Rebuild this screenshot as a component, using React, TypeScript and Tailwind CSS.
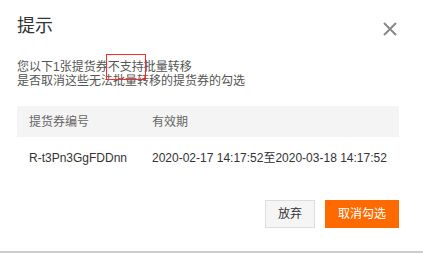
const font = { fontFamily: '"Liberation Sans", "Noto Sans CJK SC", sans-serif' };

export default function App() {
  return (
    <div
      className="relative flex h-[253px] w-[423px] flex-col bg-white text-[#333]"
      style={font}
    >
      <div className="flex items-center justify-between pl-[17px] pr-[26px] pt-[14px]">
        <h1 className="text-[18px] leading-[24px] text-[#333]">提示</h1>
        <svg width="14" height="14" viewBox="0 0 14 14" className="mt-[6px]">
          <path d="M1 1L13 13M13 1L1 13" stroke="#888" strokeWidth="2" />
        </svg>
      </div>

      <div className="mt-[22px] pl-[17px] text-[12px] leading-[14px] text-[#555]">
        <p>
          您以下1张提货券
          <span className="relative">
            不支持
            <span className="absolute -left-[2px] -right-[2px] -top-[6px] -bottom-[6px] border border-[#ff2a2a]" />
          </span>
          批量转移
        </p>
        <p>是否取消这些无法批量转移的提货券的勾选</p>
      </div>

      <div className="mx-[17px] mr-[24px] mt-[18px] text-[12px] text-[#333]">
        <div className="flex h-[31px] items-center bg-[#f4f4f4] text-[#666]">
          <span className="w-[135px] pl-[12px]">提货券编号</span>
          <span>有效期</span>
        </div>
        <div className="flex h-[42px] items-center">
          <span className="w-[135px] pl-[12px]">R-t3Pn3GgFDDnn</span>
          <span>2020-02-17 14:17:52至2020-03-18 14:17:52</span>
        </div>
      </div>

      <div className="mt-[21px] flex justify-end gap-[10px] pr-[24px]">
        <button className="h-[28px] w-[50px] border border-[#ddd] bg-[#f5f5f5] text-[12px] text-[#333]">
          放弃
        </button>
        <button className="h-[28px] w-[74px] bg-[#ff6a00] text-[12px] text-white">
          取消勾选
        </button>
      </div>

      <div className="mt-auto h-[2px] bg-[#ccc]" />
    </div>
  );
}
